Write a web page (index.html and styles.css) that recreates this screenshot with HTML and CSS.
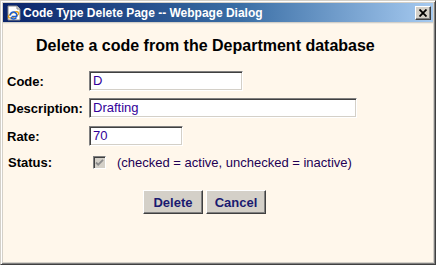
FILE: index.html
```html
<!DOCTYPE html>
<html>
<head>
<meta charset="utf-8">
<link rel="stylesheet" href="styles.css">
</head>
<body>
<div class="window">
  <div class="titlebar">
    <svg class="ie-icon" width="16" height="16" viewBox="0 0 16 16">
      <path d="M2 1h9l3 3v11H2z" fill="#fff" stroke="#8a8a8a" stroke-width="1"/>
      <path d="M11 1v3h3" fill="#e8e8e8" stroke="#8a8a8a" stroke-width="1"/>
      <ellipse cx="7.5" cy="10" rx="5.5" ry="2.2" fill="none" stroke="#e8a317" stroke-width="1.3" transform="rotate(-25 7.5 10)"/>
      <path d="M4.2 10.5a3.3 3.3 0 1 1 6.4 1H5.6M10.4 12.6a3.3 3.3 0 0 1-5.6-.2" fill="none" stroke="#1f5fcf" stroke-width="1.6"/>
    </svg>
    <span class="title">Code Type Delete Page -- Webpage Dialog</span>
    <span class="close">
      <svg width="8" height="8" viewBox="0 0 8 8"><path d="M0.5 0.5L7.5 7.5M7.5 0.5L0.5 7.5" stroke="#000" stroke-width="1.8"/></svg>
    </span>
  </div>
  <div class="content">
    <h1 class="heading">Delete a code from the Department database</h1>
    <div class="form">
      <label class="label">Code:</label>
      <div class="field"><span class="input w-code">D</span></div>
      <label class="label">Description:</label>
      <div class="field"><span class="input w-desc">Drafting</span></div>
      <label class="label rate">Rate:</label>
      <div class="field rate"><span class="input w-rate">70</span></div>
      <label class="label status">Status:</label>
      <div class="field status-field">
        <span class="checkbox">
          <svg width="9" height="9" viewBox="0 0 9 9"><path d="M1 4.5l2.2 2.2L8 1.8" fill="none" stroke="#8c8c8c" stroke-width="1.8"/></svg>
        </span>
        <span class="hint">(checked = active, unchecked = inactive)</span>
      </div>
    </div>
    <div class="buttons">
      <button class="btn">Delete</button>
      <button class="btn">Cancel</button>
    </div>
  </div>
</div>
</body>
</html>
```

FILE: styles.css
```css
html, body {
  margin: 0;
  padding: 0;
  background: #fff7eb;
}
.window {
  width: 436px;
  height: 265px;
  box-sizing: border-box;
  background: #d4d0c8;
  border-top: 1px solid #d4d0c8;
  border-left: 1px solid #d4d0c8;
  border-right: 1px solid #404040;
  border-bottom: 1px solid #404040;
  box-shadow: inset 1px 1px 0 #ffffff, inset -1px -1px 0 #808080;
  padding: 2px 2px 2px 2px;
  display: flex;
  flex-direction: column;
  font-family: "Liberation Sans", Arial, sans-serif;
}
.titlebar {
  height: 19px;
  flex: none;
  background: linear-gradient(to right, #0a246a 0%, #3a6ea5 55%, #a6caf0 100%);
  display: flex;
  align-items: center;
  padding: 0 2px 0 2px;
  margin-bottom: 1px;
}
.ie-icon {
  flex: none;
  margin-left: 1px;
}
.title {
  color: #fff;
  font-weight: bold;
  font-size: 12px;
  margin-left: 1px;
  flex: 1;
  white-space: nowrap;
}
.close {
  width: 16px;
  height: 14px;
  box-sizing: border-box;
  background: #d4d0c8;
  border-top: 1px solid #fff;
  border-left: 1px solid #fff;
  border-right: 1px solid #404040;
  border-bottom: 1px solid #404040;
  box-shadow: inset -1px -1px 0 #808080;
  display: flex;
  align-items: center;
  justify-content: center;
}
.content {
  flex: 1;
  background: #fff7eb;
  border-top: 1px solid #f0ece4;
  padding: 0 0 0 4px;
}
.heading {
  margin: 13px 0 0 29px;
  font-size: 16px;
  font-weight: bold;
  color: #000;
  line-height: 18px;
}
.form {
  margin-top: 16px;
  display: grid;
  grid-template-columns: 82px auto;
  row-gap: 7px;
  align-items: center;
}
.label {
  font-weight: bold;
  font-size: 13px;
  color: #000;
}
.rate {
  margin-top: 1px;
}
.label.status {
  padding-left: 1px;
  margin-top: -1px;
}
.field {
  display: flex;
  align-items: center;
}
.input {
  display: block;
  box-sizing: border-box;
  height: 20px;
  border-top: 1px solid #808080;
  border-left: 1px solid #808080;
  border-right: 1px solid #ffffff;
  border-bottom: 1px solid #ffffff;
  box-shadow: inset 1px 1px 0 #404040, inset -1px -1px 0 #d4d0c8;
  background: #fff;
  color: #330099;
  font-size: 13px;
  line-height: 18px;
  padding-left: 3px;
}
.w-code { width: 154px; }
.w-desc { width: 268px; }
.w-rate { width: 94px; }
.status-field {
  height: 20px;
  margin-top: -1px;
}
.checkbox {
  width: 13px;
  height: 13px;
  box-sizing: border-box;
  margin-left: 4px;
  border-top: 1px solid #808080;
  border-left: 1px solid #808080;
  border-right: 1px solid #fff;
  border-bottom: 1px solid #fff;
  box-shadow: inset 1px 1px 0 #404040;
  background: #d4d0c8;
  display: flex;
  align-items: center;
  justify-content: center;
}
.hint {
  margin-left: 11px;
  font-size: 13px;
  color: #220055;
}
.buttons {
  display: flex;
  gap: 3px;
  margin: 18px 0 0 136px;
}
.btn {
  width: 60px;
  height: 24px;
  box-sizing: border-box;
  padding: 0;
  background: #d4d0c8;
  border-top: 1px solid #fff;
  border-left: 1px solid #fff;
  border-right: 1px solid #404040;
  border-bottom: 1px solid #404040;
  box-shadow: inset -1px -1px 0 #808080;
  font-family: "Liberation Sans", Arial, sans-serif;
  font-weight: bold;
  font-size: 13px;
  color: #1a1a70;
}
```
